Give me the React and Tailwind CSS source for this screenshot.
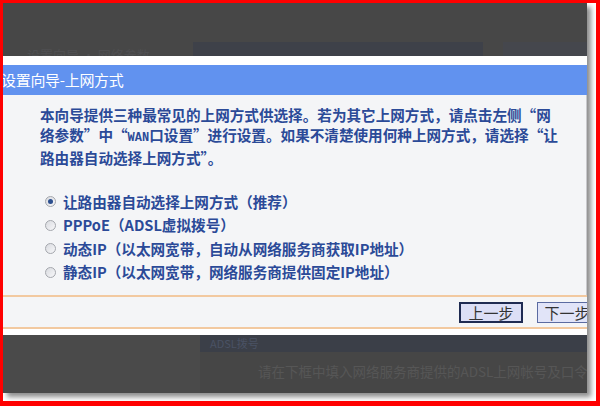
import React from 'react';

const font = { fontFamily: '"Noto Sans CJK SC", "Noto Sans", sans-serif' };

const options = [
    '让路由器自动选择上网方式（推荐）',
    'PPPoE（ADSL虚拟拨号）',
    '动态IP（以太网宽带，自动从网络服务商获取IP地址）',
    '静态IP（以太网宽带，网络服务商提供固定IP地址）',
];

const Radio = ({ checked }) => (
    <span className="w-[11px] h-[11px] rounded-full border border-[#a4a7ad] bg-gradient-to-br from-[#d9dbe0] to-[#f7f7f9] flex items-center justify-center shrink-0">
        {checked && <span className="w-[5px] h-[5px] rounded-full bg-[#2c4f8e]" />}
    </span>
);

const App = () => {
    return (
        <div className="w-[600px] h-[406px] bg-white border-solid border-[#ff0000] border-t-[3px] border-l-[3px] border-r-[4px] border-b-[5px] overflow-hidden" style={font}>
            <div className="w-[584px] h-[390px] flex flex-col overflow-hidden shadow-[4px_4px_5px_rgba(0,0,0,0.45)]">
                {/* dimmed page behind, top */}
                <div className="h-[53px] bg-[#474747] flex flex-col justify-end">
                    <div className="h-[14px] flex items-end">
                        <div className="w-[190px] shrink-0 h-[14px] overflow-hidden">
                            <div className="pl-[24px] text-[13px] leading-[26px] text-[#4f4f51] whitespace-nowrap">设置向导 · 网络参数</div>
                        </div>
                        <div className="w-[290px] shrink-0 h-[14px] bg-[#3e4149]" />
                        <div className="w-[20px] shrink-0" />
                        <div className="flex-1 h-[14px] bg-[#45474d]" />
                    </div>
                </div>

                <div className="h-[9px] bg-white" />

                {/* title */}
                <div className="h-[30px] bg-[#6192ef] flex items-center overflow-hidden">
                    <span className="-ml-[2px] text-[15px] text-white whitespace-nowrap tracking-[-0.3px]">设置向导-上网方式</span>
                </div>

                {/* body */}
                <div className="h-[200px] bg-[#f4f5f7] border-r border-[#c8c8cc] pl-[37px] pt-[10px] text-[#2b4a98] text-[14.6px] font-semibold">
                    <div className="leading-[20px] whitespace-nowrap">
                        <div>本向导提供三种最常见的上网方式供选择。若为其它上网方式，请点击左侧“网</div>
                        <div>络参数”中“<span className="text-[12px] font-bold" style={{ fontFamily: '"Liberation Mono", monospace' }}>WAN</span>口设置”进行设置。如果不清楚使用何种上网方式，请选择“让</div>
                        <div>路由器自动选择上网方式”。</div>
                    </div>
                    <div className="mt-[22px] pl-[5px] flex flex-col">
                        {options.map((o, i) => (
                            <div key={i} className="h-[23.5px] flex items-center gap-[7px] whitespace-nowrap">
                                <Radio checked={i === 0} />
                                <span>{o}</span>
                            </div>
                        ))}
                    </div>
                </div>

                {/* footer with buttons */}
                <div className="h-[2px] bg-[#f2c9a0]" />
                <div className="h-[30px] bg-[#f4f5f7] flex items-center">
                    <div className="flex-1" />
                    <button className="w-[64px] h-[21px] border-2 border-[#1f2b52] bg-[#dcdff6] text-[15px] leading-none text-[#333] flex items-center justify-center">上一步</button>
                    <div className="w-[14px]" />
                    <button className="w-[60px] h-[21px] -mr-[10px] border border-[#5b6ba1] bg-[#e1e4f8] text-[15px] leading-none text-[#333] flex items-center justify-center">下一步</button>
                </div>
                <div className="h-[2px] bg-[#f2c9a0]" />
                <div className="h-[6px] bg-white" />

                {/* dimmed page behind, bottom */}
                <div className="flex-1 bg-[#4a4a4a] flex">
                    <div className="w-[197px] shrink-0" />
                    <div className="flex-1 min-w-0 flex flex-col">
                        <div className="h-[17px] bg-[#3b3f48] pl-[10px] text-[11px] leading-[17px] text-[#4a5264] whitespace-nowrap">ADSL拨号</div>
                        <div className="flex-1 bg-[#464646] pl-[58px] pt-[9px] text-[13.5px] text-[#565656] whitespace-nowrap overflow-hidden">请在下框中填入网络服务商提供的ADSL上网帐号及口令</div>
                    </div>
                </div>
            </div>
        </div>
    );
};

export default App;
